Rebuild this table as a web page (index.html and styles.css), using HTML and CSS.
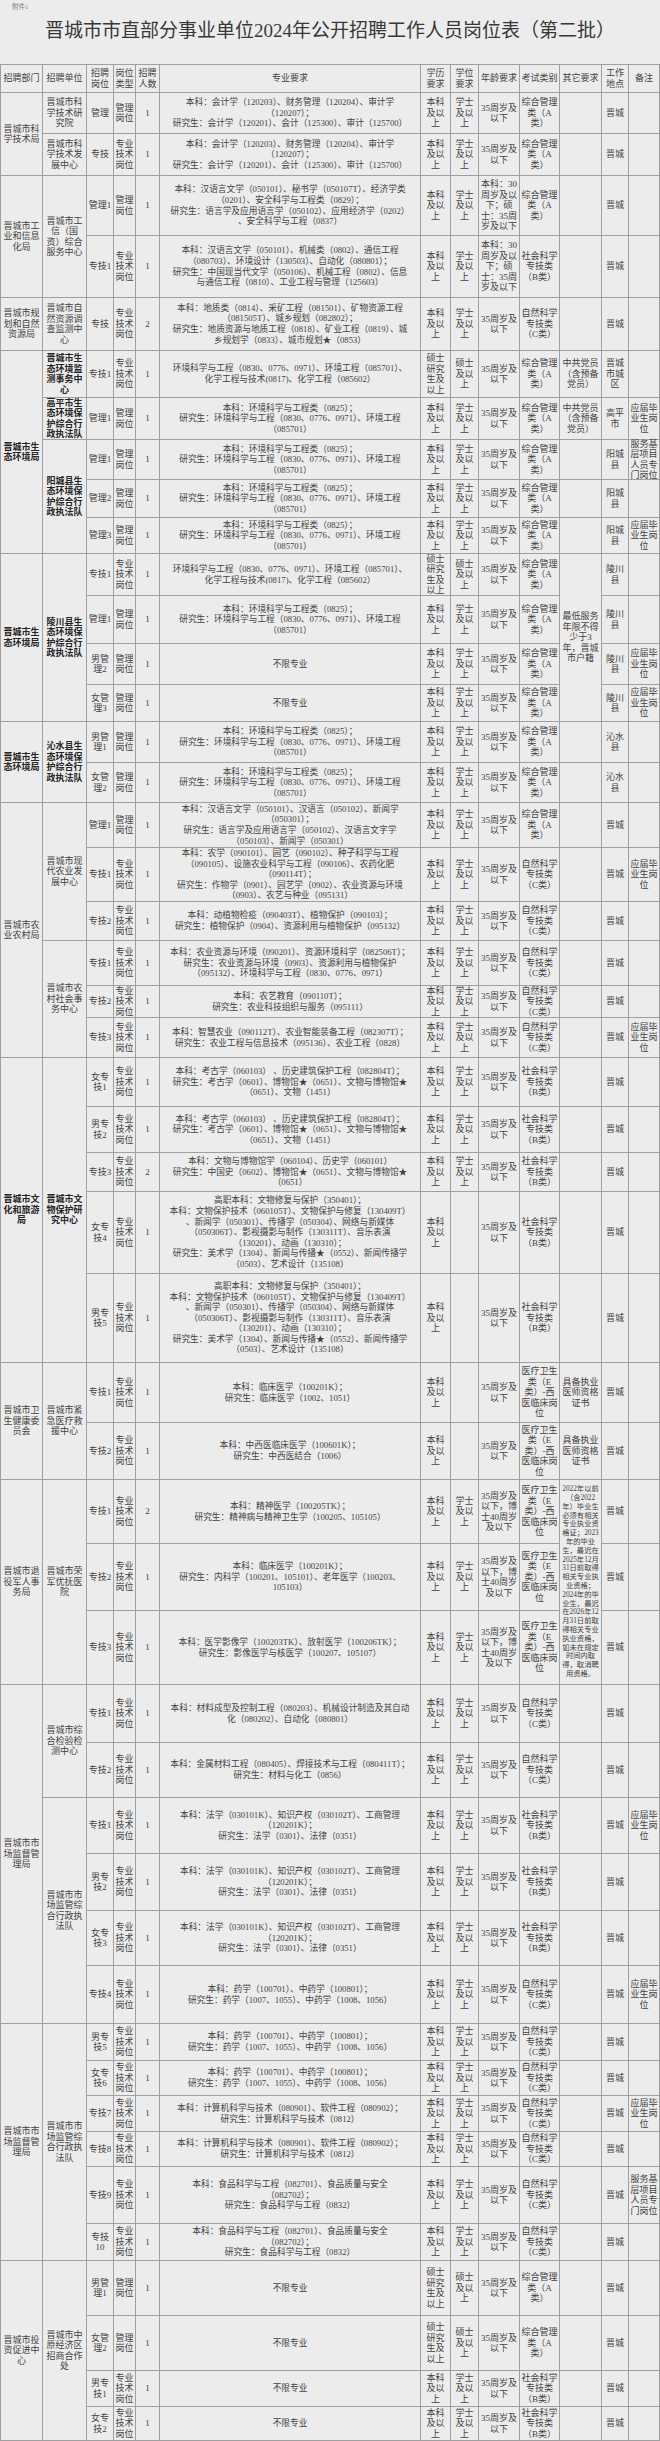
FILE: index.html
```html
<!DOCTYPE html>
<html lang="zh-CN">
<head>
<meta charset="utf-8">
<title>晋城市市直部分事业单位2024年公开招聘工作人员岗位表（第二批）</title>
<link rel="stylesheet" href="styles.css">
</head>
<body>
<div class="page">
<div class="annex">附件1</div>
<h1 class="title">晋城市市直部分事业单位2024年公开招聘工作人员岗位表（第二批）</h1>
<div class="grid">
<!-- header -->
<div class="c">招聘部门</div><div class="c">招聘单位</div><div class="c">招聘<br>岗位</div><div class="c">岗位<br>类型</div><div class="c">招聘<br>人数</div><div class="c">专业要求</div><div class="c">学历<br>要求</div><div class="c">学位<br>要求</div><div class="c">年龄要求</div><div class="c">考试类别</div><div class="c">其它要求</div><div class="c">工作<br>地点</div><div class="c">备注</div>
<!-- 1 -->
<div class="c s2">晋城市科<br>学技术局</div>
<div class="c">晋城市科<br>学技术研<br>究院</div>
<div class="c">管理</div><div class="c">管理<br>岗位</div><div class="c">1</div>
<div class="c sp">本科：会计学（120203）、财务管理（120204）、审计学<br>（120207）；<br>研究生：会计学（120201）、会计（125300）、审计（125700）</div>
<div class="c">本科<br>及以<br>上</div><div class="c">学士<br>及以<br>上</div><div class="c">35周岁及<br>以下</div><div class="c">综合管理<br>类（A<br>类）</div><div class="c"></div><div class="c">晋城</div><div class="c"></div>
<!-- 2 -->
<div class="c">晋城市科<br>学技术发<br>展中心</div>
<div class="c">专技</div><div class="c">专业<br>技术<br>岗位</div><div class="c">1</div>
<div class="c sp">本科：会计学（120203）、财务管理（120204）、审计学<br>（120207）；<br>研究生：会计学（120201）、会计（125300）、审计（125700）</div>
<div class="c">本科<br>及以<br>上</div><div class="c">学士<br>及以<br>上</div><div class="c">35周岁及<br>以下</div><div class="c">综合管理<br>类（A<br>类）</div><div class="c"></div><div class="c">晋城</div><div class="c"></div>
<!-- 3 -->
<div class="c s2">晋城市工<br>业和信息<br>化局</div>
<div class="c s2">晋城市工<br>信（国<br>资）综合<br>服务中心</div>
<div class="c">管理1</div><div class="c">管理<br>岗位</div><div class="c">1</div>
<div class="c sp">本科：汉语言文学（050101）、秘书学（050107T）、经济学类<br>（0201）、安全科学与工程类（0829）；<br>研究生：语言学及应用语言学（050102）、应用经济学（0202）<br>、安全科学与工程（0837）</div>
<div class="c">本科<br>及以<br>上</div><div class="c">学士<br>及以<br>上</div><div class="c">本科：30<br>周岁及以<br>下；硕<br>士：35周<br>岁及以下</div><div class="c">综合管理<br>类（A<br>类）</div><div class="c"></div><div class="c">晋城</div><div class="c"></div>
<!-- 4 -->
<div class="c">专技1</div><div class="c">专业<br>技术<br>岗位</div><div class="c">1</div>
<div class="c sp">本科：汉语言文学（050101）、机械类（0802）、通信工程<br>（080703）、环境设计（130503）、自动化（080801）；<br>研究生：中国现当代文学（050106）、机械工程（0802）、信息<br>与通信工程（0810）、工业工程与管理（125603）</div>
<div class="c">本科<br>及以<br>上</div><div class="c">学士<br>及以<br>上</div><div class="c">本科：30<br>周岁及以<br>下；硕<br>士：35周<br>岁及以下</div><div class="c">社会科学<br>专技类<br>（B类）</div><div class="c"></div><div class="c">晋城</div><div class="c"></div>
<!-- 5 -->
<div class="c">晋城市规<br>划和自然<br>资源局</div>
<div class="c">晋城市自<br>然资源调<br>查监测中<br>心</div>
<div class="c">专技</div><div class="c">专业<br>技术<br>岗位</div><div class="c">2</div>
<div class="c sp">本科：地质类（0814）、采矿工程（081501）、矿物资源工程<br>（081505T）、城乡规划（082802）；<br>研究生：地质资源与地质工程（0818）、矿业工程（0819）、城<br>乡规划学（0833）、城市规划★（0853）</div>
<div class="c">本科<br>及以<br>上</div><div class="c">学士<br>及以<br>上</div><div class="c">35周岁及<br>以下</div><div class="c">自然科学<br>专技类<br>（C类）</div><div class="c"></div><div class="c">晋城</div><div class="c"></div>
<!-- 6 -->
<div class="c s5 b">晋城市生<br>态环境局</div>
<div class="c b">晋城市生<br>态环境监<br>测事务中<br>心</div>
<div class="c">专技1</div><div class="c">专业<br>技术<br>岗位</div><div class="c">1</div>
<div class="c sp">环境科学与工程（0830、0776、0971）、环境工程（085701）、<br>化学工程与技术(0817)、化学工程（085602）</div>
<div class="c">硕士<br>研究<br>生及<br>以上</div><div class="c">硕士<br>及以<br>上</div><div class="c">35周岁及<br>以下</div><div class="c">综合管理<br>类（A<br>类）</div><div class="c">中共党员<br>（含预备<br>党员）</div><div class="c">晋城<br>市城<br>区</div><div class="c"></div>
<!-- 7 -->
<div class="c b">高平市生<br>态环境保<br>护综合行<br>政执法队</div>
<div class="c">管理1</div><div class="c">管理<br>岗位</div><div class="c">1</div>
<div class="c sp">本科：环境科学与工程类（0825）；<br>研究生：环境科学与工程（0830、0776、0971）、环境工程<br>（085701）</div>
<div class="c">本科<br>及以<br>上</div><div class="c">学士<br>及以<br>上</div><div class="c">35周岁及<br>以下</div><div class="c">综合管理<br>类（A<br>类）</div><div class="c">中共党员<br>（含预备<br>党员）</div><div class="c">高平<br>市</div><div class="c">应届毕<br>业生岗<br>位</div>
<!-- 8 -->
<div class="c s3 b">阳城县生<br>态环境保<br>护综合行<br>政执法队</div>
<div class="c">管理1</div><div class="c">管理<br>岗位</div><div class="c">1</div>
<div class="c sp">本科：环境科学与工程类（0825）；<br>研究生：环境科学与工程（0830、0776、0971）、环境工程<br>（085701）</div>
<div class="c">本科<br>及以<br>上</div><div class="c">学士<br>及以<br>上</div><div class="c">35周岁及<br>以下</div><div class="c">综合管理<br>类（A<br>类）</div><div class="c"></div><div class="c">阳城<br>县</div><div class="c">服务基<br>层项目<br>人员专<br>门岗位</div>
<!-- 9 -->
<div class="c">管理2</div><div class="c">管理<br>岗位</div><div class="c">1</div>
<div class="c sp">本科：环境科学与工程类（0825）；<br>研究生：环境科学与工程（0830、0776、0971）、环境工程<br>（085701）</div>
<div class="c">本科<br>及以<br>上</div><div class="c">学士<br>及以<br>上</div><div class="c">35周岁及<br>以下</div><div class="c">综合管理<br>类（A<br>类）</div><div class="c"></div><div class="c">阳城<br>县</div><div class="c"></div>
<!-- 10 -->
<div class="c">管理3</div><div class="c">管理<br>岗位</div><div class="c">1</div>
<div class="c sp">本科：环境科学与工程类（0825）；<br>研究生：环境科学与工程（0830、0776、0971）、环境工程<br>（085701）</div>
<div class="c">本科<br>及以<br>上</div><div class="c">学士<br>及以<br>上</div><div class="c">35周岁及<br>以下</div><div class="c">综合管理<br>类（A<br>类）</div><div class="c"></div><div class="c">阳城<br>县</div><div class="c">应届毕<br>业生岗<br>位</div>
<!-- 11 -->
<div class="c s4 b">晋城市生<br>态环境局</div>
<div class="c s4 b">陵川县生<br>态环境保<br>护综合行<br>政执法队</div>
<div class="c">专技1</div><div class="c">专业<br>技术<br>岗位</div><div class="c">1</div>
<div class="c sp">环境科学与工程（0830、0776、0971）、环境工程（085701）、<br>化学工程与技术(0817)、化学工程（085602）</div>
<div class="c">硕士<br>研究<br>生及<br>以上</div><div class="c">硕士<br>及以<br>上</div><div class="c">35周岁及<br>以下</div><div class="c">综合管理<br>类（A<br>类）</div><div class="c s4">最低服务<br>年限不得<br>少于3<br>年，晋城<br>市户籍</div><div class="c">陵川<br>县</div><div class="c"></div>
<!-- 12 -->
<div class="c">管理1</div><div class="c">管理<br>岗位</div><div class="c">1</div>
<div class="c sp">本科：环境科学与工程类（0825）；<br>研究生：环境科学与工程（0830、0776、0971）、环境工程<br>（085701）</div>
<div class="c">本科<br>及以<br>上</div><div class="c">学士<br>及以<br>上</div><div class="c">35周岁及<br>以下</div><div class="c">综合管理<br>类（A<br>类）</div><div class="c">陵川<br>县</div><div class="c"></div>
<!-- 13 -->
<div class="c">男管<br>理2</div><div class="c">管理<br>岗位</div><div class="c">1</div>
<div class="c sp">不限专业</div>
<div class="c">本科<br>及以<br>上</div><div class="c">学士<br>及以<br>上</div><div class="c">35周岁及<br>以下</div><div class="c">综合管理<br>类（A<br>类）</div><div class="c">陵川<br>县</div><div class="c">应届毕<br>业生岗<br>位</div>
<!-- 14 -->
<div class="c">女管<br>理3</div><div class="c">管理<br>岗位</div><div class="c">1</div>
<div class="c sp">不限专业</div>
<div class="c">本科<br>及以<br>上</div><div class="c">学士<br>及以<br>上</div><div class="c">35周岁及<br>以下</div><div class="c">综合管理<br>类（A<br>类）</div><div class="c">陵川<br>县</div><div class="c">应届毕<br>业生岗<br>位</div>
<!-- 15 -->
<div class="c s2 b">晋城市生<br>态环境局</div>
<div class="c s2 b">沁水县生<br>态环境保<br>护综合行<br>政执法队</div>
<div class="c">男管<br>理1</div><div class="c">管理<br>岗位</div><div class="c">1</div>
<div class="c sp">本科：环境科学与工程类（0825）；<br>研究生：环境科学与工程（0830、0776、0971）、环境工程<br>（085701）</div>
<div class="c">本科<br>及以<br>上</div><div class="c">学士<br>及以<br>上</div><div class="c">35周岁及<br>以下</div><div class="c">综合管理<br>类（A<br>类）</div><div class="c"></div><div class="c">沁水<br>县</div><div class="c"></div>
<!-- 16 -->
<div class="c">女管<br>理2</div><div class="c">管理<br>岗位</div><div class="c">1</div>
<div class="c sp">本科：环境科学与工程类（0825）；<br>研究生：环境科学与工程（0830、0776、0971）、环境工程<br>（085701）</div>
<div class="c">本科<br>及以<br>上</div><div class="c">学士<br>及以<br>上</div><div class="c">35周岁及<br>以下</div><div class="c">综合管理<br>类（A<br>类）</div><div class="c"></div><div class="c">沁水<br>县</div><div class="c"></div>
<!-- 17 -->
<div class="c s6">晋城市农<br>业农村局</div>
<div class="c s3">晋城市现<br>代农业发<br>展中心</div>
<div class="c">管理1</div><div class="c">管理<br>岗位</div><div class="c">1</div>
<div class="c sp">本科：汉语言文学（050101）、汉语言（050102）、新闻学<br>（050301）；<br>研究生：语言学及应用语言学（050102）、汉语言文字学<br>（050103）、新闻学（050301）</div>
<div class="c">本科<br>及以<br>上</div><div class="c">学士<br>及以<br>上</div><div class="c">35周岁及<br>以下</div><div class="c">综合管理<br>类（A<br>类）</div><div class="c"></div><div class="c">晋城</div><div class="c"></div>
<!-- 18 -->
<div class="c">专技1</div><div class="c">专业<br>技术<br>岗位</div><div class="c">1</div>
<div class="c sp">本科：农学（090101）、园艺（090102）、种子科学与工程<br>（090105）、设施农业科学与工程（090106）、农药化肥<br>（090114T）；<br>研究生：作物学（0901）、园艺学（0902）、农业资源与环境<br>（0903）、农艺与种业（095131）</div>
<div class="c">本科<br>及以<br>上</div><div class="c">学士<br>及以<br>上</div><div class="c">35周岁及<br>以下</div><div class="c">自然科学<br>专技类<br>（C类）</div><div class="c"></div><div class="c">晋城</div><div class="c">应届毕<br>业生岗<br>位</div>
<!-- 19 -->
<div class="c">专技2</div><div class="c">专业<br>技术<br>岗位</div><div class="c">1</div>
<div class="c sp">本科：动植物检疫（090403T）、植物保护（090103）；<br>研究生：植物保护（0904）、资源利用与植物保护（095132）</div>
<div class="c">本科<br>及以<br>上</div><div class="c">学士<br>及以<br>上</div><div class="c">35周岁及<br>以下</div><div class="c">自然科学<br>专技类<br>（C类）</div><div class="c"></div><div class="c">晋城</div><div class="c"></div>
<!-- 20 -->
<div class="c s3">晋城市农<br>村社会事<br>务中心</div>
<div class="c">专技1</div><div class="c">专业<br>技术<br>岗位</div><div class="c">1</div>
<div class="c sp">本科：农业资源与环境（090201）、资源环境科学（082506T）；<br>研究生：农业资源与环境（0903）、资源利用与植物保护<br>（095132）、环境科学与工程（0830、0776、0971）</div>
<div class="c">本科<br>及以<br>上</div><div class="c">学士<br>及以<br>上</div><div class="c">35周岁及<br>以下</div><div class="c">自然科学<br>专技类<br>（C类）</div><div class="c"></div><div class="c">晋城</div><div class="c"></div>
<!-- 21 -->
<div class="c">专技2</div><div class="c">专业<br>技术<br>岗位</div><div class="c">1</div>
<div class="c sp">本科：农艺教育（090110T）；<br>研究生：农业科技组织与服务（095111）</div>
<div class="c">本科<br>及以<br>上</div><div class="c">学士<br>及以<br>上</div><div class="c">35周岁及<br>以下</div><div class="c">自然科学<br>专技类<br>（C类）</div><div class="c"></div><div class="c">晋城</div><div class="c"></div>
<!-- 22 -->
<div class="c">专技3</div><div class="c">专业<br>技术<br>岗位</div><div class="c">1</div>
<div class="c sp">本科：智慧农业（090112T）、农业智能装备工程（082307T）；<br>研究生：农业工程与信息技术（095136）、农业工程（0828）</div>
<div class="c">本科<br>及以<br>上</div><div class="c">学士<br>及以<br>上</div><div class="c">35周岁及<br>以下</div><div class="c">自然科学<br>专技类<br>（C类）</div><div class="c"></div><div class="c">晋城</div><div class="c">应届毕<br>业生岗<br>位</div>
<!-- 23 -->
<div class="c s5 b">晋城市文<br>化和旅游<br>局</div>
<div class="c s5 b">晋城市文<br>物保护研<br>究中心</div>
<div class="c">女专<br>技1</div><div class="c">专业<br>技术<br>岗位</div><div class="c">1</div>
<div class="c sp">本科：考古学（060103）&nbsp;、历史建筑保护工程（082804T）；<br>研究生：考古学（0601）、博物馆★（0651）、文物与博物馆★<br>（0651）、文物（1451）</div>
<div class="c">本科<br>及以<br>上</div><div class="c">学士<br>及以<br>上</div><div class="c">35周岁及<br>以下</div><div class="c">社会科学<br>专技类<br>（B类）</div><div class="c"></div><div class="c">晋城</div><div class="c"></div>
<!-- 24 -->
<div class="c">男专<br>技2</div><div class="c">专业<br>技术<br>岗位</div><div class="c">1</div>
<div class="c sp">本科：考古学（060103）&nbsp;、历史建筑保护工程（082804T）；<br>研究生：考古学（0601）、博物馆★（0651）、文物与博物馆★<br>（0651）、文物（1451）</div>
<div class="c">本科<br>及以<br>上</div><div class="c">学士<br>及以<br>上</div><div class="c">35周岁及<br>以下</div><div class="c">社会科学<br>专技类<br>（B类）</div><div class="c"></div><div class="c">晋城</div><div class="c"></div>
<!-- 25 -->
<div class="c">专技3</div><div class="c">专业<br>技术<br>岗位</div><div class="c">2</div>
<div class="c sp">本科：文物与博物馆学（060104）、历史学（060101）<br>研究生：中国史（0602）、博物馆★（0651）、文物与博物馆★<br>（0651）</div>
<div class="c">本科<br>及以<br>上</div><div class="c">学士<br>及以<br>上</div><div class="c">35周岁及<br>以下</div><div class="c">社会科学<br>专技类<br>（B类）</div><div class="c"></div><div class="c">晋城</div><div class="c"></div>
<!-- 26 -->
<div class="c">女专<br>技4</div><div class="c">专业<br>技术<br>岗位</div><div class="c">1</div>
<div class="c sp">高职本科：文物修复与保护（350401）；<br>本科：文物保护技术（060105T）、文物保护与修复（130409T）<br>、新闻学（050301）、传播学（050304）、网络与新媒体<br>（050306T）、影视摄影与制作（130311T）、音乐表演<br>（130201）、动画（130310）；<br>研究生：美术学（1304）、新闻与传播★（0552）、新闻传播学<br>（0503）、艺术设计（135108）</div>
<div class="c">本科<br>及以<br>上</div><div class="c"></div><div class="c">35周岁及<br>以下</div><div class="c">社会科学<br>专技类<br>（B类）</div><div class="c"></div><div class="c">晋城</div><div class="c"></div>
<!-- 27 -->
<div class="c">男专<br>技5</div><div class="c">专业<br>技术<br>岗位</div><div class="c">1</div>
<div class="c sp">高职本科：文物修复与保护（350401）；<br>本科：文物保护技术（060105T）、文物保护与修复（130409T）<br>、新闻学（050301）、传播学（050304）、网络与新媒体<br>（050306T）、影视摄影与制作（130311T）、音乐表演<br>（130201）、动画（130310）；<br>研究生：美术学（1304）、新闻与传播★（0552）、新闻传播学<br>（0503）、艺术设计（135108）</div>
<div class="c">本科<br>及以<br>上</div><div class="c"></div><div class="c">35周岁及<br>以下</div><div class="c">社会科学<br>专技类<br>（B类）</div><div class="c"></div><div class="c">晋城</div><div class="c"></div>
<!-- 28 -->
<div class="c s2">晋城市卫<br>生健康委<br>员会</div>
<div class="c s2">晋城市紧<br>急医疗救<br>援中心</div>
<div class="c">专技1</div><div class="c">专业<br>技术<br>岗位</div><div class="c">1</div>
<div class="c sp">本科：临床医学（100201K）；<br>研究生：临床医学（1002、1051）</div>
<div class="c">本科<br>及以<br>上</div><div class="c"></div><div class="c">35周岁及<br>以下</div><div class="c">医疗卫生<br>类（E<br>类）-西<br>医临床岗<br>位</div><div class="c">具备执业<br>医师资格<br>证书</div><div class="c">晋城</div><div class="c"></div>
<!-- 29 -->
<div class="c">专技2</div><div class="c">专业<br>技术<br>岗位</div><div class="c">1</div>
<div class="c sp">本科：中西医临床医学（100601K）；<br>研究生：中西医结合（1006）</div>
<div class="c">本科<br>及以<br>上</div><div class="c"></div><div class="c">35周岁及<br>以下</div><div class="c">医疗卫生<br>类（E<br>类）-西<br>医临床岗<br>位</div><div class="c">具备执业<br>医师资格<br>证书</div><div class="c">晋城</div><div class="c"></div>
<!-- 30 -->
<div class="c s3">晋城市退<br>役军人事<br>务局</div>
<div class="c s3">晋城市荣<br>军优抚医<br>院</div>
<div class="c">专技1</div><div class="c">专业<br>技术<br>岗位</div><div class="c">2</div>
<div class="c sp">本科：精神医学（100205TK）；<br>研究生：精神病与精神卫生学（100205、105105）</div>
<div class="c">本科<br>及以<br>上</div><div class="c">学士<br>及以<br>上</div><div class="c">35周岁及<br>以下，博<br>士40周岁<br>及以下</div><div class="c">医疗卫生<br>类（E<br>类）-西<br>医临床岗<br>位</div>
<div class="c s3 tiny">2022年以前<br>（含2022<br>年）毕业生<br>必须有相关<br>专业执业资<br>格证；2023<br>年的毕业<br>生，最迟在<br>2025年12月<br>31日前取得<br>相关专业执<br>业资格；<br>2024年的毕<br>业生，最迟<br>在2026年12<br>月31日前取<br>得相关专业<br>执业资格，<br>如未在规定<br>时间内取<br>得，取消聘<br>用资格。</div>
<div class="c">晋城</div><div class="c"></div>
<!-- 31 -->
<div class="c">专技2</div><div class="c">专业<br>技术<br>岗位</div><div class="c">1</div>
<div class="c sp">本科：临床医学（100201K）；<br>研究生：内科学（100201、105101）、老年医学（100203、<br>105103）</div>
<div class="c">本科<br>及以<br>上</div><div class="c">学士<br>及以<br>上</div><div class="c">35周岁及<br>以下，博<br>士40周岁<br>及以下</div><div class="c">医疗卫生<br>类（E<br>类）-西<br>医临床岗<br>位</div><div class="c">晋城</div><div class="c"></div>
<!-- 32 -->
<div class="c">专技3</div><div class="c">专业<br>技术<br>岗位</div><div class="c">1</div>
<div class="c sp">本科：医学影像学（100203TK）、放射医学（100206TK）；<br>研究生：影像医学与核医学（100207、105107）</div>
<div class="c">本科<br>及以<br>上</div><div class="c">学士<br>及以<br>上</div><div class="c">35周岁及<br>以下，博<br>士40周岁<br>及以下</div><div class="c">医疗卫生<br>类（E<br>类）-西<br>医临床岗<br>位</div><div class="c">晋城</div><div class="c"></div>
<!-- 33 -->
<div class="c s6">晋城市市<br>场监督管<br>理局</div>
<div class="c s2">晋城市综<br>合检验检<br>测中心</div>
<div class="c">专技1</div><div class="c">专业<br>技术<br>岗位</div><div class="c">1</div>
<div class="c sp">本科：材料成型及控制工程（080203）、机械设计制造及其自动<br>化（080202）、自动化（080801）</div>
<div class="c">本科<br>及以<br>上</div><div class="c">学士<br>及以<br>上</div><div class="c">35周岁及<br>以下</div><div class="c">自然科学<br>专技类<br>（C类）</div><div class="c"></div><div class="c">晋城</div><div class="c"></div>
<!-- 34 -->
<div class="c">专技2</div><div class="c">专业<br>技术<br>岗位</div><div class="c">1</div>
<div class="c sp">本科：金属材料工程（080405）、焊接技术与工程（080411T）；<br>研究生：材料与化工（0856）</div>
<div class="c">本科<br>及以<br>上</div><div class="c">学士<br>及以<br>上</div><div class="c">35周岁及<br>以下</div><div class="c">自然科学<br>专技类<br>（C类）</div><div class="c"></div><div class="c">晋城</div><div class="c"></div>
<!-- 35 -->
<div class="c s4">晋城市市<br>场监管综<br>合行政执<br>法队</div>
<div class="c">专技1</div><div class="c">专业<br>技术<br>岗位</div><div class="c">1</div>
<div class="c sp">本科：法学（030101K）、知识产权（030102T）、工商管理<br>（120201K）；<br>研究生：法学（0301）、法律（0351）</div>
<div class="c">本科<br>及以<br>上</div><div class="c">学士<br>及以<br>上</div><div class="c">35周岁及<br>以下</div><div class="c">社会科学<br>专技类<br>（B类）</div><div class="c"></div><div class="c">晋城</div><div class="c">应届毕<br>业生岗<br>位</div>
<!-- 36 -->
<div class="c">男专<br>技2</div><div class="c">专业<br>技术<br>岗位</div><div class="c">1</div>
<div class="c sp">本科：法学（030101K）、知识产权（030102T）、工商管理<br>（120201K）；<br>研究生：法学（0301）、法律（0351）</div>
<div class="c">本科<br>及以<br>上</div><div class="c">学士<br>及以<br>上</div><div class="c">35周岁及<br>以下</div><div class="c">社会科学<br>专技类<br>（B类）</div><div class="c"></div><div class="c">晋城</div><div class="c"></div>
<!-- 37 -->
<div class="c">女专<br>技3</div><div class="c">专业<br>技术<br>岗位</div><div class="c">1</div>
<div class="c sp">本科：法学（030101K）、知识产权（030102T）、工商管理<br>（120201K）；<br>研究生：法学（0301）、法律（0351）</div>
<div class="c">本科<br>及以<br>上</div><div class="c">学士<br>及以<br>上</div><div class="c">35周岁及<br>以下</div><div class="c">社会科学<br>专技类<br>（B类）</div><div class="c"></div><div class="c">晋城</div><div class="c"></div>
<!-- 38 -->
<div class="c">专技4</div><div class="c">专业<br>技术<br>岗位</div><div class="c">1</div>
<div class="c sp">本科：药学（100701）、中药学（100801）；<br>研究生：药学（1007、1055）、中药学（1008、1056）</div>
<div class="c">本科<br>及以<br>上</div><div class="c">学士<br>及以<br>上</div><div class="c">35周岁及<br>以下</div><div class="c">自然科学<br>专技类<br>（C类）</div><div class="c"></div><div class="c">晋城</div><div class="c">应届毕<br>业生岗<br>位</div>
<!-- 39 -->
<div class="c s6">晋城市市<br>场监督管<br>理局</div>
<div class="c s6">晋城市市<br>场监管综<br>合行政执<br>法队</div>
<div class="c">男专<br>技5</div><div class="c">专业<br>技术<br>岗位</div><div class="c">1</div>
<div class="c sp">本科：药学（100701）、中药学（100801）；<br>研究生：药学（1007、1055）、中药学（1008、1056）</div>
<div class="c">本科<br>及以<br>上</div><div class="c">学士<br>及以<br>上</div><div class="c">35周岁及<br>以下</div><div class="c">自然科学<br>专技类<br>（C类）</div><div class="c"></div><div class="c">晋城</div><div class="c"></div>
<!-- 40 -->
<div class="c">女专<br>技6</div><div class="c">专业<br>技术<br>岗位</div><div class="c">1</div>
<div class="c sp">本科：药学（100701）、中药学（100801）；<br>研究生：药学（1007、1055）、中药学（1008、1056）</div>
<div class="c">本科<br>及以<br>上</div><div class="c">学士<br>及以<br>上</div><div class="c">35周岁及<br>以下</div><div class="c">自然科学<br>专技类<br>（C类）</div><div class="c"></div><div class="c">晋城</div><div class="c"></div>
<!-- 41 -->
<div class="c">专技7</div><div class="c">专业<br>技术<br>岗位</div><div class="c">1</div>
<div class="c sp">本科：计算机科学与技术（080901）、软件工程（080902）；<br>研究生：计算机科学与技术（0812）</div>
<div class="c">本科<br>及以<br>上</div><div class="c">学士<br>及以<br>上</div><div class="c">35周岁及<br>以下</div><div class="c">自然科学<br>专技类<br>（C类）</div><div class="c"></div><div class="c">晋城</div><div class="c">应届毕<br>业生岗<br>位</div>
<!-- 42 -->
<div class="c">专技8</div><div class="c">专业<br>技术<br>岗位</div><div class="c">1</div>
<div class="c sp">本科：计算机科学与技术（080901）、软件工程（080902）；<br>研究生：计算机科学与技术（0812）</div>
<div class="c">本科<br>及以<br>上</div><div class="c">学士<br>及以<br>上</div><div class="c">35周岁及<br>以下</div><div class="c">自然科学<br>专技类<br>（C类）</div><div class="c"></div><div class="c">晋城</div><div class="c"></div>
<!-- 43 -->
<div class="c">专技9</div><div class="c">专业<br>技术<br>岗位</div><div class="c">1</div>
<div class="c sp">本科：食品科学与工程（082701）、食品质量与安全<br>（082702）；<br>研究生：食品科学与工程（0832）</div>
<div class="c">本科<br>及以<br>上</div><div class="c">学士<br>及以<br>上</div><div class="c">35周岁及<br>以下</div><div class="c">自然科学<br>专技类<br>（C类）</div><div class="c"></div><div class="c">晋城</div><div class="c">服务基<br>层项目<br>人员专<br>门岗位</div>
<!-- 44 -->
<div class="c">专技<br>10</div><div class="c">专业<br>技术<br>岗位</div><div class="c">1</div>
<div class="c sp">本科：食品科学与工程（082701）、食品质量与安全<br>（082702）；<br>研究生：食品科学与工程（0832）</div>
<div class="c">本科<br>及以<br>上</div><div class="c">学士<br>及以<br>上</div><div class="c">35周岁及<br>以下</div><div class="c">自然科学<br>专技类<br>（C类）</div><div class="c"></div><div class="c">晋城</div><div class="c"></div>
<!-- 45 -->
<div class="c s4">晋城市投<br>资促进中<br>心</div>
<div class="c s4">晋城市中<br>原经济区<br>招商合作<br>处</div>
<div class="c">男管<br>理1</div><div class="c">管理<br>岗位</div><div class="c">1</div>
<div class="c sp">不限专业</div>
<div class="c">硕士<br>研究<br>生及<br>以上</div><div class="c">硕士<br>及以<br>上</div><div class="c">35周岁及<br>以下</div><div class="c">综合管理<br>类（A<br>类）</div><div class="c"></div><div class="c">晋城</div><div class="c"></div>
<!-- 46 -->
<div class="c">女管<br>理2</div><div class="c">管理<br>岗位</div><div class="c">1</div>
<div class="c sp">不限专业</div>
<div class="c">硕士<br>研究<br>生及<br>以上</div><div class="c">硕士<br>及以<br>上</div><div class="c">35周岁及<br>以下</div><div class="c">综合管理<br>类（A<br>类）</div><div class="c"></div><div class="c">晋城</div><div class="c"></div>
<!-- 47 -->
<div class="c">男专<br>技1</div><div class="c">专业<br>技术<br>岗位</div><div class="c">1</div>
<div class="c sp">不限专业</div>
<div class="c">本科<br>及以<br>上</div><div class="c">学士<br>及以<br>上</div><div class="c">35周岁及<br>以下</div><div class="c">社会科学<br>专技类<br>（B类）</div><div class="c"></div><div class="c">晋城</div><div class="c"></div>
<!-- 48 -->
<div class="c">女专<br>技2</div><div class="c">专业<br>技术<br>岗位</div><div class="c">1</div>
<div class="c sp">不限专业</div>
<div class="c">本科<br>及以<br>上</div><div class="c">学士<br>及以<br>上</div><div class="c">35周岁及<br>以下</div><div class="c">社会科学<br>专技类<br>（B类）</div><div class="c"></div><div class="c">晋城</div><div class="c"></div>
</div>
</div>
</body>
</html>
```

FILE: styles.css
```css
html, body {
  margin: 0;
  padding: 0;
  background: #ececec;
}

.page {
  width: 660px;
  height: 2441px;
  overflow: hidden;
  font-family: "Liberation Serif", "Noto Sans CJK SC", serif;
  color: #424242;
}

.annex {
  height: 14px;
  padding-left: 12px;
  font-size: 6.5px;
  line-height: 14px;
  color: #7a7a7a;
}

.title {
  margin: 0;
  height: 50px;
  font-size: 19px;
  line-height: 34px;
  font-weight: normal;
  text-align: center;
  color: #383838;
}

.grid {
  display: grid;
  width: 660px;
  box-sizing: border-box;
  padding: 1px;
  gap: 1px;
  background: #a0a0a0;
  grid-template-columns: 41px 43px 26px 21px 23px 260px 29px 27px 40px 39px 41px 26px 30px;
  grid-template-rows:
    27px
    40px 41px 59px 61px 52px 46px 41px 39px 37px 35px
    41px 47px 40px 36px 40px 39px 44px 53px 38px 44px
    31px 39px 48px 45px 38px 81px 88px 59px 56px 63px
    66px 73px 57px 54px 55px 56px 54px 57px 36px 34px
    35px 34px 56px 36px 54px 54px 35px 33px;
}

.c {
  display: flex;
  align-items: center;
  justify-content: center;
  text-align: center;
  background: #ececec;
  font-size: 9px;
  line-height: 10.5px;
  min-width: 0;
  min-height: 0;
}

.sp {
  font-size: 8.7px;
  line-height: 10.6px;
}

.b {
  font-weight: bold;
  color: #252525;
}

.tiny {
  font-size: 7.3px;
  line-height: 8.8px;
}

.s2 { grid-row: span 2; }
.s3 { grid-row: span 3; }
.s4 { grid-row: span 4; }
.s5 { grid-row: span 5; }
.s6 { grid-row: span 6; }
```
